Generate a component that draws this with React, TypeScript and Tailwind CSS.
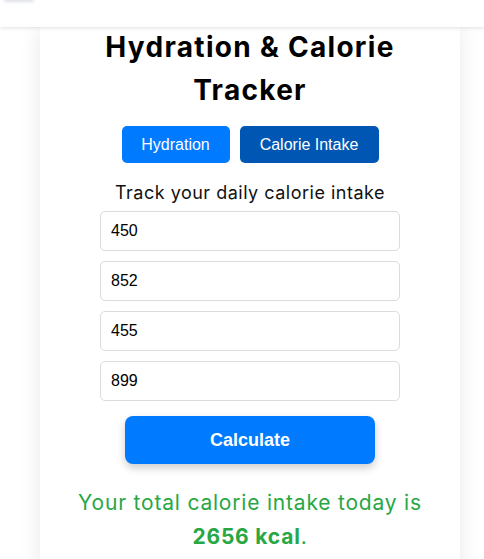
import React from "react";

export default function App() {
  const values = ["450", "852", "455", "899"];
  return (
    <div className="min-h-[559px] bg-white relative overflow-hidden">
      <div className="h-[27px] bg-white relative z-10 shadow-[0_1px_4px_rgba(0,0,0,0.12)]">
        <div className="absolute left-[4px] -top-[3px] w-[30px] h-[5px] rounded-full bg-gray-300 blur-[1.5px] opacity-70" />
      </div>
      <div className="mx-[40px] w-[420px] bg-white shadow-[0_0_20px_rgba(0,0,0,0.09)] flex flex-col items-center pb-[20px]">
        <h1
          className="-mt-[1px] text-[28px] font-bold leading-[43px] tracking-[1.3px] text-black text-center px-[40px]"
          style={{ fontFamily: "Inter, sans-serif" }}
        >
          Hydration &amp; Calorie Tracker
        </h1>
        <div className="flex gap-[10px] mt-[14px]" style={{ fontFamily: "'Liberation Sans', Arial, sans-serif" }}>
          <button className="h-[37px] w-[108px] rounded-[5px] bg-[#007bff] text-white text-[16px]">Hydration</button>
          <button className="h-[37px] w-[139px] rounded-[5px] bg-[#0056b3] text-white text-[16px]">Calorie Intake</button>
        </div>
        <p
          className="mt-[17px] text-[18px] leading-[26px] tracking-[0.5px] text-[#111]"
          style={{ fontFamily: "Inter, sans-serif" }}
        >
          Track your daily calorie intake
        </p>
        <div className="flex flex-col gap-[10px] mt-[5px]">
          {values.map((v) => (
            <input
              key={v}
              defaultValue={v}
              className="w-[300px] h-[40px] border border-[#dcdcdc] rounded-[5px] px-[10px] text-[16px] text-black outline-none"
              style={{ fontFamily: "'Liberation Sans', Arial, sans-serif" }}
            />
          ))}
        </div>
        <button
          className="mt-[15px] w-[250px] h-[48px] rounded-[8px] bg-[#007bff] text-white text-[18px] font-bold shadow-[0_4px_8px_rgba(0,0,0,0.2)]"
          style={{ fontFamily: "'Liberation Sans', Arial, sans-serif" }}
        >
          Calculate
        </button>
        <p
          className="mt-[22px] text-[21px] leading-[34px] tracking-[0.8px] text-[#28a745] text-center"
          style={{ fontFamily: "Inter, sans-serif" }}
        >
          Your total calorie intake today is
          <br />
          <b className="font-bold">2656 kcal</b>.
        </p>
      </div>
    </div>
  );
}
